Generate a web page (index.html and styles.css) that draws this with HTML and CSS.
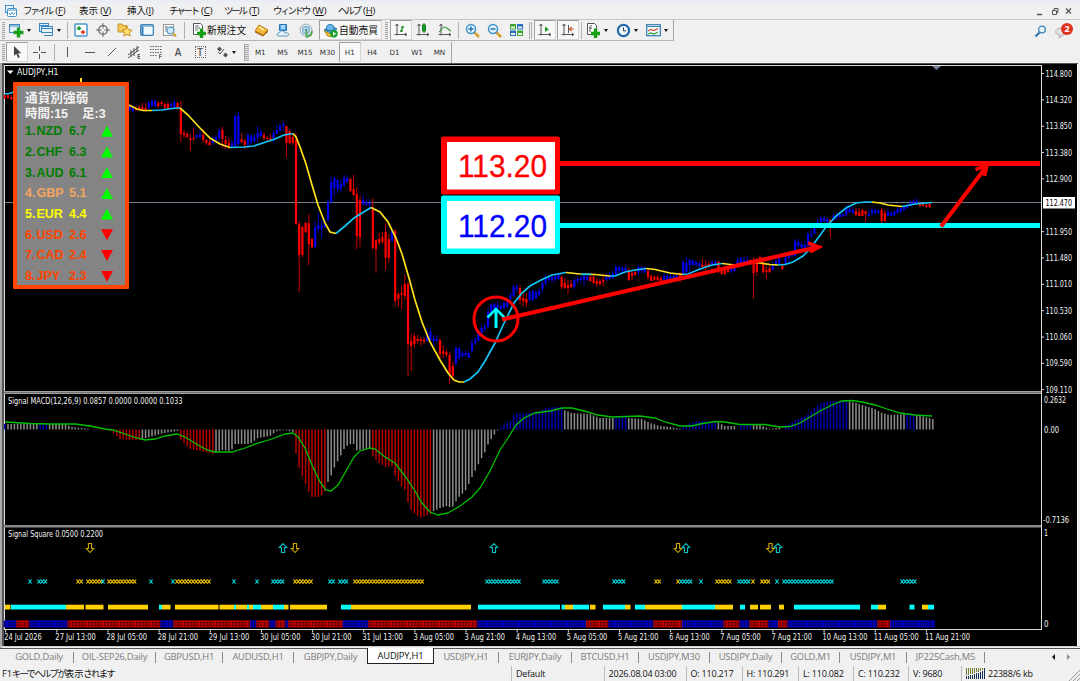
FILE: index.html
```html
<!DOCTYPE html>
<html lang="ja">

<head>
	<meta charset="UTF-8">
	<meta name="viewport" content="width=device-width, initial-scale=1.0">
	<title>AUDJPY,H1</title>
	<link rel="stylesheet" href="styles.css">
</head>

<body>
	<nav class="menubar">
		<svg class="app-icon" width="12" height="12" viewBox="0 0 12 12"><rect x=".5" y=".5" width="8" height="7" fill="#e8f4fd" stroke="#3f8fc8"/><rect x="2.5" y="3.5" width="9" height="8" rx="1" fill="#fff" stroke="#3f8fc8"/><path d="M3 5h8" stroke="#3f8fc8"/><path d="M4 8l1.5 2L7 7.500l1.500 2L10 7.500" fill="none" stroke="#3f8fc8"/></svg>
		<span class="menu m-file"><i>ファイル</i> (<u>F</u>)</span>
		<span class="menu m-view">表示 (<u>V</u>)</span>
		<span class="menu m-insert">挿入(<u>I</u>)</span>
		<span class="menu m-chart"><i>チャート</i> (<u>C</u>)</span>
		<span class="menu m-tool"><i>ツール</i> (<u>T</u>)</span>
		<span class="menu m-window"><i>ウィンドウ</i> (<u>W</u>)</span>
		<span class="menu m-help"><i>ヘルプ</i> (<u>H</u>)</span>
		<svg class="win-buttons" width="40" height="10" viewBox="0 0 40 10" fill="none" stroke="#555"><path d="M1 8.500h5" stroke-width="1.500"/><path d="M16.500 4.500h4v4h-4zM18 4V2.500h4v4h-1"/><path d="M30 2.500l5 5M35 2.500l-5 5" stroke-width="1.300"/></svg>
	</nav>

	<div class="toolbar main-tools">
		<div class="bar">
			<span class="grip"></span>
			<span class="tool drop"><svg width="16" height="16" viewBox="0 0 16 16"><rect x="1.500" y="2.500" width="10" height="8" fill="#e6f3fb" stroke="#3c8abf"/><path d="M2 4h9" stroke="#3c8abf"/><path d="M10.500 5.500v10M5.500 10.500h10" stroke="#18a018" stroke-width="3.400"/></svg></span>
			<span class="tool drop"><svg width="16" height="16" viewBox="0 0 16 16" fill="#dceffc" stroke="#3c86bd"><rect x="1.500" y="1.500" width="9" height="8"/><rect x="3.500" y="4.500" width="11" height="6"/><path d="M6 13.500h8.500v-3M2 3.500h8M4 6.500h10" fill="none"/></svg></span>
			<span class="sep"></span>
			<span class="tool"><svg width="14" height="14" viewBox="0 0 14 14"><rect x="1" y="1" width="12" height="12" rx="1" fill="#fff" stroke="#4a98cf" stroke-width="1.500"/><path d="M2.500 5.500l2.500-2.500 2.500 2.500L5 7.500z" fill="#1d9a2f"/><path d="M6.500 9l2.500-2 2.500 2L9 11.500z" fill="#e33d20"/></svg></span>
			<span class="tool"><svg width="14" height="14" viewBox="0 0 14 14" fill="none" stroke="#666"><circle cx="7" cy="7" r="4.300" stroke-width="1.300"/><path d="M7 0v5.500M7 8.500V14M0 7h5.500M8.500 7H14"/></svg></span>
			<span class="tool"><svg width="16" height="16" viewBox="0 0 16 16"><path d="M1 10V2h4l1 1.500h4V10z" fill="#f5c65b" stroke="#c99528"/><path d="M10 4.500l1.500 3.300 3.600.4-2.700 2.400.8 3.500-3.200-1.800L6.800 14l.8-3.400L5 8.200l3.500-.4z" fill="#ffe070" stroke="#c9901d"/></svg></span>
			<span class="tool"><svg width="14" height="14" viewBox="0 0 14 14"><rect x=".7" y="1.700" width="12.600" height="10.600" rx="1" fill="#f2f9fe" stroke="#3f84b8" stroke-width="1.300"/><path d="M1 3h12" stroke="#3f84b8"/><rect x="1.500" y="3.500" width="2" height="8.500" fill="#2f7fc0"/></svg></span>
			<span class="tool"><svg width="15" height="15" viewBox="0 0 15 15" fill="none"><rect x="1.500" y="1.500" width="10" height="11" fill="#fafafa" stroke="#999"/><path d="M3 4h3M4 3v6M9 3v3" stroke="#888"/><circle cx="8.500" cy="7.500" r="3.400" fill="#d3ebf9" stroke="#5aa3d2" stroke-width="1.300"/><path d="M11 10l3 3.500" stroke="#d7a23a" stroke-width="2"/></svg></span>
			<span class="sep sep-wide"></span>
			<span class="tool order"><svg width="16" height="16" viewBox="0 0 16 16"><path d="M2.500 1.500h7l2 2v9h-9z" fill="#fff" stroke="#555"/><path d="M4 4h4M4 6h5M4 8h3" stroke="#777"/><path d="M10.500 6.500v9.500M6 11.500h9" stroke="#17a017" stroke-width="3.400"/></svg><b>新規注文</b></span>
			<span class="tool"><svg width="15" height="14" viewBox="0 0 15 14"><path d="M5 2l9 5-5 5-8-4z" fill="#f4b93a" stroke="#b77e17"/><path d="M1 8l8 4 5-5v2l-5 4.500L1 9.500z" fill="#a86d12"/><path d="M5 4l5 3" stroke="#ffe9a0" stroke-width="1.500"/></svg></span>
			<span class="tool"><svg width="14" height="15" viewBox="0 0 14 15"><path d="M3.500 1.500h7v6h-7z" fill="#4ba7e4" stroke="#2475b5"/><path d="M5 3h4M5 5h4" stroke="#fff"/><path d="M3 13c-3 0-2-3 0-3 1-3 5-3 6 0 5-1 4 3 2 3z" fill="#e4f1fa" stroke="#5a93bb"/></svg></span>
			<span class="tool signal"><svg width="15" height="15" viewBox="0 0 15 15" fill="none"><circle cx="7" cy="7" r="5.800" stroke="#b0bec5" stroke-width="1.400"/><circle cx="7" cy="7" r="3.300" stroke="#6caecb" stroke-width="1.400"/><circle cx="7" cy="7" r="1.500" fill="#3a8cc0"/><path d="M7.500 7.500v6.500c4-.5 5.500-3 5.500-6" stroke="#45a84b" stroke-width="1.700"/></svg></span>
			<span class="tool auto pressed"><svg width="15" height="15" viewBox="0 0 15 15"><path d="M1 7l6.500-4L14 6l-6 4z" fill="#4aa0d8" stroke="#2a76a8"/><path d="M3.500 4.500c0-4 7.500-4 7.500 0v2c-2 1.500-5.500 1.500-7.500 0z" fill="#62b7e8" stroke="#2a76a8"/><path d="M1.500 8l6 3 4-2-2 5-5-1z" fill="#f3c53e" stroke="#b98c1b"/><circle cx="11" cy="10.800" r="3.700" fill="#15a32b"/><path d="M10 8.800l3 2-3 2z" fill="#fff"/></svg><b>自動売買</b></span>
			<span class="grip grip-gap"></span>
			<span class="tool pressed"><svg width="14" height="14" viewBox="0 0 14 14" fill="none" stroke="#555"><path d="M3 1.500v11M.5 11.500h12M1.500 3L3 1l1.500 2M11 10l2 1.500-2 1.500"/><path d="M8 3v6M8 4h2M6 8h2" stroke="#18871f" stroke-width="1.300"/></svg></span>
			<span class="tool"><svg width="14" height="14" viewBox="0 0 14 14" fill="none" stroke="#555"><path d="M3 1.500v11M.5 11.500h12M1.500 3L3 1l1.500 2M11 10l2 1.500-2 1.500"/><path d="M8 0v10" stroke="#18871f"/><rect x="6.500" y="2" width="3" height="6" fill="#16a32a" stroke="#117a1c"/></svg></span>
			<span class="tool"><svg width="14" height="14" viewBox="0 0 14 14" fill="none" stroke="#555"><path d="M3 1.500v11M.5 11.500h12M1.500 3L3 1l1.500 2M11 10l2 1.500-2 1.500"/><path d="M1 9c2-1 3-5 5.500-5S10 7 13 8" stroke="#3b9c43" stroke-width="1.200"/></svg></span>
			<span class="sep"></span>
			<span class="tool"><svg width="15" height="15" viewBox="0 0 15 15" fill="none"><path d="M9 9l5 5" stroke="#d5a12e" stroke-width="2.600"/><circle cx="6" cy="6" r="4.500" fill="#e3f3fc" stroke="#3e93cb" stroke-width="1.500"/><path d="M3.500 6h5M6 3.500v5" stroke="#2578b4" stroke-width="1.500"/></svg></span>
			<span class="tool"><svg width="15" height="15" viewBox="0 0 15 15" fill="none"><path d="M9 9l5 5" stroke="#d5a12e" stroke-width="2.600"/><circle cx="6" cy="6" r="4.500" fill="#e3f3fc" stroke="#3e93cb" stroke-width="1.500"/><path d="M3.500 6h5" stroke="#2578b4" stroke-width="1.500"/></svg></span>
			<span class="tool"><svg width="15" height="14" viewBox="0 0 15 14"><path d="M1 1h6v5.500H1zM8 7.500h6V13H8z" fill="#3fa337"/><path d="M8 1h6v5.500H8zM1 7.500h6V13H1z" fill="#2f6fc0"/><path d="M2 3.500h4v2H2zM9 3.500h4v2H9zM2 10h4v2H2zM9 10h4v2H9z" fill="#e9f5e6"/></svg></span>
			<span class="sep sep-double"></span>
			<span class="tool pressed"><svg width="14" height="14" viewBox="0 0 14 14" fill="none" stroke="#555"><path d="M3 1.500v11M.5 11.500h12M1.500 3L3 1l1.500 2M11 10l2 1.500-2 1.500"/><path d="M7 3.500l4 2.800L7 9z" fill="#1fa12c" stroke="none"/></svg></span>
			<span class="tool pressed"><svg width="14" height="14" viewBox="0 0 14 14" fill="none" stroke="#555"><path d="M3 1.500v11M.5 11.500h12M1.500 3L3 1l1.500 2M11 10l2 1.500-2 1.500M7.500 2v8"/><path d="M8 6h5M10.500 4L8.500 6l2 2" stroke="#c4552a" stroke-width="1.200"/></svg></span>
			<span class="sep sep-tight"></span>
			<span class="tool drop"><svg width="15" height="16" viewBox="0 0 15 16"><path d="M1.500 1.500h7l2 2v9h-9z" fill="#fff" stroke="#555"/><path d="M6 3.500c-1.500-.5-2 1-2 3.500v3M3 6h3" fill="none" stroke="#555"/><path d="M9.500 6.500v9.500M5 11.500h9" stroke="#17a017" stroke-width="3.400"/></svg></span>
			<span class="tool drop"><svg width="15" height="15" viewBox="0 0 15 15" fill="none"><circle cx="7.500" cy="7.500" r="5.600" fill="#eef7fd" stroke="#2368a8" stroke-width="2.200"/><path d="M7.500 4.500v3.300H10" stroke="#333"/></svg></span>
			<span class="tool drop"><svg width="15" height="14" viewBox="0 0 15 14" fill="none"><rect x=".7" y="1.700" width="13.600" height="11" fill="#f4fafe" stroke="#3c83b5" stroke-width="1.300"/><path d="M1 3.500h13" stroke="#3c83b5"/><path d="M2 8l3-1.500 3 1 4-2" stroke="#d0532c" stroke-width="1.200"/><path d="M2 11l3-1 3 1 4-2" stroke="#329c3b" stroke-width="1.200"/></svg></span>
		</div>
		<svg class="find" width="14" height="14" viewBox="0 0 14 14" fill="none"><path d="M5.500 8.500l-4 4" stroke="#2f6da5" stroke-width="2"/><circle cx="8" cy="5.500" r="3.300" fill="#eaf4fb" stroke="#3a82bd" stroke-width="1.300"/></svg>
		<span class="chat"><svg width="14" height="14" viewBox="0 0 14 14"><path d="M7 3c-8 0-8 7-2 7l-1 3 4-3c7-1 6-7-1-7z" fill="#e4e4e4" stroke="#aaa"/></svg><em>2</em></span>
	</div>

	<div class="toolbar line-tools">
		<div class="bar">
			<span class="grip"></span>
			<span class="tool pressed"><svg width="12" height="14" viewBox="0 0 12 14"><path d="M3 1v10l2.300-2.200L7 13l1.800-.8L7 8.200h3.300z" fill="#444"/></svg></span>
			<span class="tool"><svg width="14" height="14" viewBox="0 0 14 14" stroke="#555"><path d="M7.500 1v5M7.500 9v5M1 7.500h5M9 7.500h5"/></svg></span>
			<span class="sep sep-gap"></span>
			<span class="tool"><svg width="14" height="14" viewBox="0 0 14 14" stroke="#555"><path d="M6.500 2v10"/></svg></span>
			<span class="tool"><svg width="14" height="14" viewBox="0 0 14 14" stroke="#555"><path d="M2 7.500h10"/></svg></span>
			<span class="tool"><svg width="14" height="14" viewBox="0 0 14 14" stroke="#555"><path d="M3 11l8-8"/></svg></span>
			<span class="tool"><svg width="14" height="14" viewBox="0 0 14 14" stroke="#555" fill="none"><path d="M1 10l11-8M1 13l11-8M4 5v7M7 3v8M10 1v6M13 9.500h-2v4h2M11 11.500h2"/></svg></span>
			<span class="tool"><svg width="14" height="14" viewBox="0 0 14 14" stroke="#666" fill="none"><path d="M1 1.500h12M1 4.500h12M1 7.500h12M1 10.500h7" stroke-dasharray="1.500 1"/><path d="M12.500 9.500h-2v4M10.500 11.500h2"/></svg></span>
			<span class="tool letter">A</span>
			<span class="tool letter boxed"><span>T</span></span>
			<span class="tool drop shapes"><svg width="14" height="14" viewBox="0 0 14 14" fill="#555"><path d="M2 4l2.500-2.500L7 4 4.500 6.500zM8 10l2.500-2.500L13 10l-2.500 2.500z"/><path d="M3 7l2 2 4-5" fill="none" stroke="#555"/></svg></span>
			<span class="grip grip-mid"></span>
			<span class="frame">M1</span>
			<span class="frame">M5</span>
			<span class="frame">M15</span>
			<span class="frame">M30</span>
			<span class="frame pressed">H1</span>
			<span class="frame">H4</span>
			<span class="frame">D1</span>
			<span class="frame">W1</span>
			<span class="frame">MN</span>
		</div>
	</div>

	<main class="chart-window">
		<svg class="chart" id="chart" width="1080" height="585" viewBox="0 63 1080 585"></svg>
		<section class="strength">
			<h2>通貨別強弱</h2>
			<h3><span>時間:15</span><span>足:3</span></h3>
			<ol>
				<li class="strong"><span>1.</span><span>NZD</span><span>6.7</span><i class="up"></i></li>
				<li class="strong"><span>2.</span><span>CHF</span><span>6.3</span><i class="up"></i></li>
				<li class="strong"><span>3.</span><span>AUD</span><span>6.1</span><i class="up"></i></li>
				<li class="mid"><span>4.</span><span>GBP</span><span>5.1</span><i class="up"></i></li>
				<li class="even"><span>5.</span><span>EUR</span><span>4.4</span><i class="up"></i></li>
				<li class="weak"><span>6.</span><span>USD</span><span>2.6</span><i class="down"></i></li>
				<li class="weak"><span>7.</span><span>CAD</span><span>2.4</span><i class="down"></i></li>
				<li class="weak"><span>8.</span><span>JPY</span><span>2.3</span><i class="down"></i></li>
			</ol>
		</section>
	</main>

	<div class="tabs">
		<span>GOLD,Daily</span>
		<span>OIL-SEP26,Daily</span>
		<span>GBPUSD,H1</span>
		<span>AUDUSD,H1</span>
		<span>GBPJPY,Daily</span>
		<span class="active">AUDJPY,H1</span>
		<span>USDJPY,H1</span>
		<span>EURJPY,Daily</span>
		<span>BTCUSD,H1</span>
		<span>USDJPY,M30</span>
		<span>USDJPY,Daily</span>
		<span>GOLD,M1</span>
		<span>USDJPY,M1</span>
		<span>JP225Cash,M5</span>
		<svg class="tab-scroll" width="24" height="8" viewBox="0 0 24 8"><path d="M5 1v6L2 4z" fill="#111"/><path d="M17 1v6l3-3z" fill="#888"/></svg>
	</div>

	<footer class="status">
		<span class="help">F1<i>キーでヘルプが</i>表示<i>されます</i></span>
		<span>Default</span>
		<span>2026.08.04 03:00</span>
		<span>O: 110.217</span>
		<span>H: 110.291</span>
		<span>L: 110.082</span>
		<span>C: 110.232</span>
		<span>V: 9680</span>
		<span class="net"><svg width="19" height="11" viewBox="0 0 19 11" shape-rendering="crispEdges"><path d="M.5 0v7M2.500 0v7M4.500 0v6M6.500 0v6M8.500 0v5M10.500 0v4M12.500 0v4M14.500 0v3M16.500 0v2" stroke="#6f7d2c"/><path d="M.5 8v3M2.500 8v3M4.500 7v4M6.500 7v4M8.500 6v5M10.500 5v6M12.500 5v6M14.500 4v7M16.500 3v8M18.500 0v11" stroke="#143052"/></svg>22388/6 kb</span>
		<svg class="resize" width="12" height="12" viewBox="0 0 12 12" stroke="#999"><path d="M1 12L12 1M5 12l7-7M9 12l3-3"/></svg>
	</footer>

	<script src="chart.js"></script>
</body>

</html>
```
FILE: styles.css
```css
		* {
			box-sizing: border-box;
		}

		body {
			margin: 0;
			width: 1080px;
			height: 681px;
			overflow: hidden;
			display: flex;
			flex-direction: column;
			background: #f0f0f0;
			font-family: 'Open Sans', 'Noto Sans CJK JP', sans-serif;
			font-size: 9px;
			color: #111;
		}

		i, em, b {
			font-style: normal;
			font-weight: normal;
		}

		/* menu */
		.menubar {
			height: 19px;
			padding: 3px 4px 0 5px;
			display: flex;
			align-items: center;
			background: linear-gradient(#e9eef6 0 2px, #f0f0f0 3px);
			line-height: 16px;
			font-size: 9.5px;
			white-space: nowrap;
		}

		.app-icon {
			margin-right: 6px;
		}

		.menu {
			letter-spacing: -.1px;
		}

		.menu i {
			letter-spacing: -2.3px;
			margin-right: 1px;
		}

		.m-file { width: 56px; }
		.m-view { width: 48px; }
		.m-insert { width: 42px; }
		.m-chart { width: 55px; }
		.m-tool { width: 49px; }
		.m-window { width: 65px; }
		.m-help { width: 50px; }

		.win-buttons {
			margin-left: auto;
		}

		/* toolbars */
		.toolbar {
			display: flex;
			align-items: center;
			background: #f0f0f0;
		}

		.main-tools {
			height: 22px;
			border-top: 1px solid #c6c6c6;
		}

		.line-tools {
			height: 22px;
		}

		.bar {
			height: 21px;
			display: flex;
			align-items: center;
			border-right: 1px solid #a5a5a5;
			border-bottom: 1px solid #b4b4b4;
		}

		.line-tools .bar {
			border-bottom: none;
			padding-left: 2px;
		}

		.grip {
			width: 3px;
			height: 17px;
			margin: 0 0 0 2px;
			background: repeating-linear-gradient(#a8a8a8 0 1px, #e6e6e6 1px 2px);
		}

		.line-tools .grip {
			margin: 0 1px 0 0;
		}

		.grip-gap {
			margin: 0 2px 0 3px;
		}

		.line-tools .grip-mid {
			margin: 0;
			margin-left: 4px;
			border-left: 1px solid #a5a5a5;
			width: 5px;
		}

		.tool {
			width: 22px;
			height: 20px;
			display: flex;
			align-items: center;
			justify-content: center;
		}

		.tool.drop {
			width: 30px;
			justify-content: flex-start;
			padding-left: 3px;
		}

		.tool.drop::after {
			content: '';
			margin-left: 3px;
			border: 2.5px solid transparent;
			border-top: 3px solid #111;
			border-bottom: 0;
		}

		.tool.shapes {
			width: 29px;
		}

		.tool.shapes svg {
			margin-left: 1px;
		}

		.tool b {
			font-family: 'Noto Sans CJK JP', sans-serif;
			font-size: 9.8px;
			white-space: nowrap;
		}

		.tool.order {
			width: 62px;
			justify-content: flex-start;
			padding-left: 3px;
		}

		.tool.signal {
			width: 25px;
		}

		.tool.auto {
			width: 63px;
			gap: 1px;
		}

		.pressed {
			background: #f8f8f8;
			border: 1px solid #d5d5d5;
			border-top-color: #a0a0a0;
			border-left-color: #a0a0a0;
		}

		.main-tools .pressed + .pressed {
			margin-left: 1px;
		}

		.sep {
			width: 1px;
			height: 17px;
			margin: 0 2px;
			background: #b0b0b0;
		}

		.sep-wide {
			margin: 0 3px 0 4px;
		}

		.sep-tight {
			margin: 0 1px 0 2px;
		}

		.sep-double {
			width: 3px;
			background: none;
			border: 1px solid #b0b0b0;
			border-width: 0 1px;
		}

		.sep-gap {
			margin: 0 2px 0 4px;
		}

		.letter {
			font-size: 10px;
			font-weight: 600;
			color: #555;
		}

		.boxed span {
			border: 1px dotted #666;
			width: 11px;
			line-height: 10px;
			text-align: center;
		}

		.frame {
			width: 22.400px;
			height: 20px;
			display: flex;
			align-items: center;
			justify-content: center;
			font-family: 'DejaVu Sans', sans-serif;
			font-size: 7.2px;
			letter-spacing: -.1px;
			color: #333;
		}

		.find {
			margin-left: auto;
		}

		.chat {
			position: relative;
			width: 14px;
			height: 14px;
			margin: 3px 11px 0 7px;
		}

		.chat em {
			position: absolute;
			left: 6px;
			top: -2px;
			width: 12px;
			height: 12px;
			border-radius: 6px;
			background: #e0301e;
			color: #fff;
			font-weight: 700;
			line-height: 12px;
			text-align: center;
		}

		/* chart */
		.chart-window {
			position: relative;
			height: 585px;
		}

		.chart {
			display: block;
		}

		.chart text {
			font-family: 'DejaVu Sans Condensed', 'DejaVu Sans', sans-serif;
			font-size: 8px;
			fill: #f2f2f2;
		}

		.chart .tag {
			font-family: 'Liberation Sans', sans-serif;
			font-size: 31px;
		}

		.chart .tag-red {
			fill: #f00;
			stroke: #f00;
			stroke-width: .3;
		}

		.chart .tag-blue {
			fill: #00f;
			stroke: #00f;
			stroke-width: .3;
		}

		.chart .now {
			fill: #000;
		}

		.strength {
			position: absolute;
			left: 13px;
			top: 19px;
			width: 116px;
			height: 207px;
			padding: 4px 8px;
			border: 4px solid #ff4500;
			border-radius: 1px;
			background: #848484;
			font-family: 'Liberation Sans', 'Noto Sans CJK JP', sans-serif;
		}

		.strength h2,
		.strength h3 {
			margin: 0;
			font-size: 12.700px;
			line-height: 16px;
			font-weight: 700;
			color: #f2f2f2;
			white-space: nowrap;
		}

		.strength h3 {
			display: flex;
			gap: 14px;
			font-size: 12.500px;
		}

		.strength ol {
			margin: -1px 0 0;
			padding: 0;
			list-style: none;
		}

		.strength li {
			display: grid;
			grid-template-columns: 11.500px 32.500px 32px 12px;
			align-items: center;
			height: 20.700px;
			font-size: 12.500px;
			font-weight: 700;
		}

		.strong { color: #007d00; }
		.mid { color: #f4a460; }
		.even { color: #ff0; }
		.weak { color: #ff4500; }

		.up,
		.down {
			width: 12px;
			height: 11px;
			background: #0f0;
			clip-path: polygon(50% 0, 100% 100%, 0 100%);
		}

		.down {
			background: #f00;
			clip-path: polygon(0 0, 100% 0, 50% 100%);
		}

		/* chart tabs */
		.tabs {
			height: 17px;
			padding-left: 5px;
			display: grid;
			grid-template-columns: 69px 82px 67px 71px 73px 67px 65px 73px 67px 71px 72px 58px 67px 78px 1fr;
			align-items: center;
			border-top: 1px solid #555;
			background: #f0f0f0;
			font-size: 9.400px;
			letter-spacing: -.2px;
			color: #7c7c7c;
		}

		.tabs span {
			height: 11px;
			line-height: 10px;
			text-align: center;
			border-right: 1px solid #8c8c8c;
			white-space: nowrap;
		}

		.tabs .active {
			align-self: start;
			height: 16px;
			line-height: 15px;
			margin-top: -1px;
			background: #fff;
			border: 1px solid #222;
			border-top: none;
			color: #111;
		}

		.tabs span:nth-child(5) {
			border-right: none;
		}

		.tab-scroll {
			justify-self: end;
			margin-right: 6px;
		}

		/* status line */
		.status {
			position: relative;
			height: 16px;
			padding-left: 2px;
			display: grid;
			grid-template-columns: 509px 92.500px 82px 56px 56.500px 55px 55px 53px 1fr;
			align-items: center;
			letter-spacing: -.2px;
			background: #f0f0f0;
		}

		.status span {
			height: 15px;
			padding-left: 4px;
			line-height: 15px;
			border-left: 1px solid #bbb;
			white-space: nowrap;
		}

		.status .help {
			border: none;
			padding: 0;
			font-size: 9.4px;
		}

		.help i {
			letter-spacing: -1.700px;
		}

		.status .net {
			display: flex;
			align-items: center;
			gap: 3px;
		}

		.resize {
			position: absolute;
			right: 0;
			bottom: 0;
		}
```
FILE: chart.js
```js
const chart = document.getElementById('chart');
const STEP = 3.2;
const barX = i => 4.8 + i * STEP;

function add(name, attrs, text) {
	const node = document.createElementNS('http://www.w3.org/2000/svg', name);
	for (const key in attrs) node.setAttribute(key, attrs[key]);
	if (text) node.textContent = text;
	chart.appendChild(node);
	return node;
}

function rect(x, y, width, height, fill) {
	return add('rect', { x, y, width, height, fill });
}

function line(points, stroke, width) {
	return add('polyline', { points, stroke, 'stroke-width': width, fill: 'none' });
}

function label(x, y, text, width, cls) {
	return add('text', { x, y, textLength: width, lengthAdjust: 'spacingAndGlyphs', class: cls || '' }, text);
}

// window frame
rect(0, 63, 1080, 585, '#f0f0f0');
rect(0, 63, 2, 585, '#a9a9a9');
rect(2, 63, 1076, 583, '#555');
rect(4, 64, 1073, 582, '#000');
rect(1077, 64, 1, 583, '#fff');
rect(0, 646, 1080, 1, '#ccc');
rect(4, 65, 1037, 1, '#ddd');
rect(4, 65, 1, 565, '#ddd');

// current price level
rect(5, 202, 1036, 1, '#708090');

// candles: colour, high, body top, body bottom, low
const candles = {
	0: 'r 94 96 98 99|r 94 95 98 99|r 95 97 99 100',
	39: `b 104 106 110 111|b 106 108 111 112|r 106 108 110 111|r 105 107 110 110|r 103 107 110 111|r 103 108 110 112
|b 101 103 108 109|b 99 101 106 107|b 100 101 106 107|r 101 103 106 108|r 101 102 104 106|r 103 104 108 110|r 102 104 109 109
|b 102 104 106 108|b 99 102 108 108|r 102 103 109 110|r 101 108 134 142|r 130 133 135 138|r 132 134 137 138|r 134 138 140 151
|r 128 138 139 141|b 134 135 137 139|b 130 135 137 139|r 129 135 140 143|r 139 140 143 145|r 139 142 145 146|b 136 139 143 145
|b 135 137 141 142|b 128 131 138 140|r 127 130 139 148|r 136 140 144 149|r 138 143 146 149|b 140 143 146 148|b 114 116 146 147
|b 112 116 144 145|r 133 139 142 143|r 139 141 145 149|b 133 135 145 146|b 134 136 142 144|b 134 137 141 143|b 126 133 138 142
|b 129 132 136 137|r 132 135 138 140|r 136 138 139 141|r 134 138 140 142|b 130 133 138 142|b 125 130 134 134|b 123 126 131 131
|b 121 124 126 131|r 126 126 143 157|r 130 131 143 144|r 135 137 143 145|r 133 140 224 225|r 221 224 255 292|r 226 227 255 257
|r 222 223 232 233|r 214 223 244 265|r 238 239 247 248|b 221 227 247 248|b 213 225 229 233|b 220 226 229 238|b 218 221 227 228
|b 199 202 220 222|b 177 182 202 204|b 177 178 188 196|b 179 180 189 193|b 180 184 189 192|b 175 178 186 186|b 175 178 182 183
|r 178 179 191 192|r 175 189 195 196|r 187 194 236 249|r 196 200 237 247|b 195 200 204 206|b 199 202 205 206|b 199 203 205 210
|r 198 207 248 250|r 239 240 249 273|r 233 239 243 245|r 232 237 242 244|r 223 232 258 270|r 234 239 258 263|b 229 231 241 242
|r 229 231 301 305|r 292 294 299 307|r 286 293 295 309|r 274 284 296 300|r 282 284 344 376|r 334 341 346 371|r 333 336 344 348
|r 335 339 341 344|r 337 339 341 346|r 337 340 342 344|b 328 333 341 342|b 328 332 340 341|b 335 338 341 349|b 335 339 341 342
|r 339 340 354 358|r 345 351 354 358|r 350 352 355 357|r 352 355 374 384|r 362 366 376 380|b 346 348 364 365|b 347 348 358 360
|b 351 353 356 358|b 350 353 355 357|b 351 353 358 358|b 339 343 351 352|b 337 340 343 345|b 331 333 341 341|b 324 328 333 334
|b 323 327 329 332|b 308 312 327 327|b 303 305 313 315|b 302 304 309 311|b 302 305 308 310|b 303 306 309 310|b 301 303 308 310
|b 300 302 307 308|b 292 295 299 300|b 284 287 296 297|b 284 287 289 292|r 285 288 300 304|r 291 298 301 306|r 293 299 303 307
|b 290 292 300 302|b 289 291 300 301|b 290 292 298 299|b 288 291 295 296|b 281 283 289 292|b 274 277 284 285|b 275 278 280 282
|b 276 277 280 283|b 274 276 279 282|b 273 275 279 280|r 276 277 287 289|r 278 283 288 289|r 280 285 288 294|r 280 284 287 288
|b 278 280 287 289|b 277 279 281 284|b 276 278 280 283|b 274 276 280 286|b 274 277 280 281|r 273 277 281 282|r 275 277 283 284
|r 278 281 284 287|r 279 281 284 286|r 276 280 282 286|b 273 276 280 281|b 272 275 279 280|b 271 273 278 279|b 265 267 275 276
|b 265 267 271 273|b 266 268 271 274|b 265 268 271 272|r 268 270 280 281|r 270 273 276 280|r 269 272 275 275|b 265 267 272 276
|b 266 267 271 273|b 266 268 272 274|r 269 271 277 280|r 274 276 281 281|r 275 277 280 281|r 275 277 280 281|r 276 278 281 281
|b 273 276 280 281|b 273 276 280 280|b 274 276 279 280|b 274 276 280 280|b 274 276 279 280|r 272 275 279 282|b 260 262 274 275
|b 257 263 272 274|b 259 260 265 272|b 260 260 265 266|b 261 262 265 266|b 262 263 266 268|r 259 265 267 267|r 260 265 268 271
|r 262 264 266 268|b 260 262 265 266|b 260 262 265 266|r 261 262 271 274|r 267 270 274 275|r 269 270 274 275|r 267 270 272 273
|b 266 268 271 273|b 263 267 271 272|b 258 260 264 267|b 257 258 263 264|b 257 260 262 263|b 256 260 262 263|r 259 260 262 265
|r 257 262 273 299|r 258 262 272 276|r 255 257 262 265|r 257 262 272 274|r 266 270 272 279|r 265 268 272 273|b 262 265 270 270
|b 259 261 265 266|b 256 258 264 264|r 263 266 269 270|b 255 257 264 265|b 253 255 258 264|b 252 254 256 258|b 239 241 256 257
|b 239 242 246 247|b 242 244 248 249|b 241 245 250 251|b 232 234 246 247|b 229 234 236 238|b 224 227 234 234|b 219 222 227 228
|b 216 218 222 223|b 216 218 221 222|b 218 219 222 223|r 219 220 222 237|b 213 216 220 221|b 212 215 218 219|b 213 214 217 218
|b 213 214 216 217|b 205 208 215 216|b 207 209 212 213|b 207 210 213 214|r 208 211 215 216|r 208 212 216 216|r 209 210 216 216
|r 211 211 214 221|b 210 214 216 217|b 207 210 213 216|b 208 210 213 215|b 209 211 213 214|r 208 210 221 223|r 210 213 221 222
|b 209 212 216 217|b 211 213 216 216|b 210 212 215 216|b 207 209 213 214|b 206 208 212 213|b 206 207 210 211|b 204 206 208 209
|b 200 203 206 207|b 199 201 204 205|b 198 201 203 204|r 202 203 206 207|r 203 204 206 206|r 203 205 207 208|r 202 204 207 208`
};

for (const start in candles) {
	candles[start].split('|').forEach((row, n) => {
		const [kind, high, top, bottom, low] = row.trim().split(' ');
		const x = barX(+start + n);
		rect(x - .5, high, 1, low - high, kind === 'r' ? '#c80000' : '#0000c0');
		rect(x - 1.1, top, 2.2, bottom - top, kind === 'r' ? '#f00' : '#00e');
	});
}

// moving average, coloured by slope
const RISE = '#14c4f4';
const FALL = '#ffe21a';
const MA = 1.7;
line('5,94 9,93.5 14,92', RISE, MA);
line('81,78 81,83', FALL, 2);
line('129,105 137,109 143,110.5 152,110.5', FALL, MA);
line('152,110.5 162,110 172,108.5 180,108', RISE, MA);
line('180,108 188,115 200,128 210,138 220,144 230,147.5', FALL, MA);
line('230,147.5 244,147 254,146 266,142 275,139 284,135 293,133.5', RISE, MA);
line('293,133.5 296,137 300,147 306,164 312,185 318,205 325,223 330,232 336,233.5', FALL, MA);
line('336,233.5 345,226 354,218 362,213 371,207.5', RISE, MA);
line('371,207.5 380,212 388,222 396,238 402,254 409,278 415,300 422,322 430,342 440,360 448,373 454,380 459,382 464,382', FALL, MA);
line('464,382 470,379 478,372 485,361 495,343 505,321 514,303 522,293 530,286 541,280 552,275 566,272.5', RISE, MA);
line('566,272.5 580,274 595,274.5 610,276', FALL, MA);
line('581,274.3 591,274.3', RISE, MA);
line('610,276 615,276 625,272 635,270 646,268.5', RISE, MA);
line('646,268.5 655,269.500 670,273 683,274.5', FALL, MA);
line('683,274.5 688,274 700,269 712,265 722,263.5', RISE, MA);
line('722,263.5 735,265 750,262 760,263 770,264.5 778,265', FALL, MA);
line('778,265 785,264.5 793,262 803,256 810,249 818,238 826,227 836,216 846,208 856,203 865,202 872,202', RISE, MA);
line('872,202 880,203 888,205 902,206.5', FALL, MA);
line('902,206.5 915,204 932,202.5', RISE, MA);

// price levels and tags
line('560,163.5 1040,163.5', '#f00', 5);
line('560,225.5 1040,225.5', '#0ff', 5);
add('rect', { x: 441, y: 136.5, width: 119, height: 58, rx: 2, fill: '#f00' });
rect(447, 142, 108, 47.5, '#fff');
add('rect', { x: 441, y: 195.5, width: 119, height: 58.5, rx: 2, fill: '#0ff' });
rect(447, 201, 108, 47.5, '#fff');
label(458, 177, '113.20', 89, 'tag tag-red');
label(458, 237, '112.20', 89, 'tag tag-blue');

// entry point and forecast arrows
line('496,328 496,309', '#0ff', 3);
line('487.5,317.5 496,309 504.5,317.5', '#0ff', 2.6);
add('circle', { cx: 496, cy: 319, r: 22, fill: 'none', stroke: '#f00', 'stroke-width': 3 });
line('502,319.5 818,247', '#f00', 4);
line('808,243 819,247 810,252', '#f00', 3.6);
line('941,226.5 986,167', '#f00', 4);
line('975.5,169.5 987,165.5 984.5,176', '#f00', 3.6);
add('path', { d: 'M932 66h9l-4.500 4z', fill: '#708090' });

// MACD histogram: colour, then x,y tips along the run
const histogram = [
	['b', '4,424 7,424'], ['g', '8,424 38,424'], ['b', '39,424 48,424'],
	['g', '48.500,424 65,424 72,427 90,429'], ['r', '93,430 110,430 113,433 120,439 130,440 141,440'],
	['g', '142,439 150,437 160,434 170,432 178,431'], ['r', '179,438 185,444 190,449 200,451 213,454'],
	['g', '215,453 222,450 231,451 235,444 250,444 258,438 270,436 277,431 285,430 294,432'],
	['r', '295,449 299,467 303,478 308,490 311,497 318,497 322,495 326,490'],
	['g', '327,484 331,476 335,466 341,455 345,447 350,444 354,444 357,451 360,450 371,448'],
	['r', '371.500,455 378,462 385,467 392,466 395,476 402,487 405,490 408,502 411,510 415,514 420,518 431,514'],
	['g', '432,512 440,508 447,506 452,508 458,498 466,490 472,477 480,461 485,452 489,442 494,435 498,430'],
	['b', '500,428 505,424 511,420 515,413 530,413 540,411 545,408 555,407 563,407'],
	['g', '564,410 572,413 590,414 600,418 614,418'], ['b', '615,416 627,416'],
	['g', '628,418 642,419 650,423 660,426 670,427 681,429'], ['b', '682,427 690,423 697,421 716,422'],
	['g', '717,422 725,426 737,426'], ['b', '738,425 752,424'], ['g', '753,425 760,425 770,429 782,427'],
	['b', '783,426 790,424 795,420 805,416 812,410 820,403 830,401 847,401'],
	['g', '848,401 856,403 865,406 875,409 882,413 890,415 905,414'], ['b', '906,414 915,415'],
	['g', '916,415 925,417 933,419']
];
const histColors = { r: '#b80000', g: '#8c8c8c', b: '#0000b4' };
const ZERO = 429.5;

histogram.forEach(([kind, tips]) => {
	const pts = tips.split(' ').map(p => p.split(',').map(Number));
	for (let i = 0; i < 291; i++) {
		const x = barX(i);
		for (let k = 1; k < pts.length; k++) {
			const [x1, y1] = pts[k - 1];
			const [x2, y2] = pts[k];
			if (x < x1 || x >= x2) continue;
			const y = y1 + (y2 - y1) * (x - x1) / (x2 - x1);
			rect(x - .75, Math.min(y, ZERO), 1.5, Math.max(.7, Math.abs(y - ZERO)), histColors[kind]);
		}
	}
});
line('5,422 30,423.5 50,424 75,424 90,426 105,429 113,430 125,434 137,438 145,440 155,439 165,436 177,434 185,437 198,445 207,450 215,452 232,452 245,448 258,443 272,439 285,434 293,433 298,437 305,448 312,465 320,482 326,490 331,491 338,485 346,471 354,457 360,451 370,448 375,449 385,457 395,463 405,476 415,491 422,503 430,512 438,515 448,513 460,506 472,497 480,488 490,471 500,450 508,438 516,425 524,418 535,413 550,411 562,408 572,408 584,411 598,415 612,417 640,416 655,418 665,422 680,426 692,426 700,424 715,421.5 725,422 740,424.5 765,424.5 780,427 790,426.5 800,423 810,417 820,411 832,405 842,401 852,400.5 862,402 875,405 887,409 900,413 915,415 932,416', '#00c000', 1.3);

// signal arrows
const GOLD = '#ffd000';
[[90, 0], [283, 1], [295, 0], [494, 1], [678, 0], [686, 1], [770.5, 0], [778, 1]].forEach(([x, up]) => {
	add('path', {
		d: 'M0 -4.500L3.700 -.5H1.600V4.500H-1.600V-.5H-3.700Z',
		transform: `translate(${x} 548) rotate(${up ? 0 : 180})`,
		fill: 'none', stroke: up ? '#00c4cc' : '#cfa400', 'stroke-width': 1.1
	});
});

// small crosses: colour, from, to
const crosses = 'c 30 30|c 39 46|y 78 82|y 88 101|c 103 106|y 109 136|c 151 151|c 173 173|y 177 209|c 234 234|c 257 257|c 273 283|y 295 312|c 330 334|c 340 347|y 355 424|c 487 520|c 544 558|c 614 625|y 656 660|y 678 678|c 681 692|c 701 701|y 717 731|c 739 750|y 753 753|y 762 769|c 777 777|c 784 833|c 902 916';
crosses.split('|').forEach(run => {
	const [kind, from, to] = run.split(' ');
	for (let x = +from; x <= +to; x += STEP) {
		add('path', { d: `M${x - 1.6} 579.500l3.200 4m0-4l-3.200 4`, stroke: kind === 'c' ? '#00e8f0' : GOLD, 'stroke-width': 1.1 });
	}
});

// trend blocks
const blocks = 'y 5 10.5|c 11 66|y 66 84|y 85.5 103.5|y 108 148|c 159 162|y 162 170.5|y 175 218.5|y 219.5 234|c 234 236|y 236 247|c 247 249|y 249 253|c 253 261|y 261 273|c 273 284|y 284 288.5|y 290 327|c 341 351|y 351 471|c 478 560|c 561.5 565|y 565 573|c 573 589|y 590 595.5|c 603 625|y 625 630.5|c 635 645|y 645 682|c 682 715|y 715 733|c 740 745|y 750 758|y 760 771|y 779 784|c 794 860|c 871 878|y 878 886|c 909.5 914.5|y 922 928|c 928 934';
blocks.split('|').forEach(run => {
	const [kind, from, to] = run.split(' ');
	rect(+from, 604.7, to - from, 4.8, kind === 'c' ? '#0ff' : GOLD);
});

// bottom squares
const redRuns = [[17, 29], [68, 160], [173, 249], [256, 268], [276, 284], [288, 341], [369, 478], [586, 607], [653, 683], [723, 738], [748, 767], [777, 786], [876, 891]];
for (let i = 0; i < 291; i++) {
	const x = barX(i);
	const red = redRuns.some(([a, b]) => x >= a && x <= b);
	rect(x - 1.2, 620.5, 3.4, 6.8, red ? '#c80000' : '#0000cc');
	rect(x - .2, 622, 1.4, 1.5, red ? '#200000' : '#000020');
	rect(x - .2, 624.5, 1.4, 1.5, red ? '#200000' : '#000020');
}

// panel borders and axes
rect(4, 391, 1037, 3, '#a0a0a0');
rect(4, 392, 1037, 1, '#707070');
rect(4, 525, 1037, 2.5, '#888');
rect(4, 629, 1037, 1, '#ddd');
rect(1041, 65, 1, 565, '#ddd');

const prices = ['114.800', '114.320', '113.850', '113.380', '112.900', '', '111.950', '111.480', '111.010', '110.530', '110.060', '109.590', '109.110'];
prices.forEach((price, n) => {
	const y = 73.5 + n * 26.35;
	if (!price) return;
	rect(1042, y - .5, 2, 1, '#ddd');
	label(1045.5, y + 3, price, 26.5);
});
rect(1043, 197, 32, 11.5, '#fff');
label(1045.5, 206, '112.470', 26.5, 'now');
label(1044, 402.500, '0.2632', 22);
label(1044, 432.5, '0.00', 15);
label(1043, 522.5, '-0.7136', 26);
label(1044, 535.5, '1', 4);
label(1044, 627, '0', 4.5);

label(17, 74.700, 'AUDJPY,H1', 41.5);
add('path', { d: 'M7 70.500h6.500l-3.250 3.500z', fill: '#fff' });
label(8, 403.800, 'Signal MACD(12,26,9) 0.0857 0.0000 0.0000 0.1033', 174.5);
label(8, 537, 'Signal Square 0.0500 0.2200', 95);

const times = ['24 Jul 2026', '27 Jul 13:00', '28 Jul 05:00', '28 Jul 21:00', '29 Jul 13:00', '30 Jul 05:00', '30 Jul 21:00', '31 Jul 13:00', '3 Aug 05:00', '3 Aug 21:00', '4 Aug 13:00', '5 Aug 05:00', '5 Aug 21:00', '6 Aug 13:00', '7 Aug 05:00', '7 Aug 21:00', '10 Aug 13:00', '11 Aug 05:00', '11 Aug 21:00'];
times.forEach((time, n) => {
	const x = 4.2 + n * 51.15;
	rect(x + 1, 630, 1, 2.5, '#ddd');
	label(x, 640, time, n === 0 ? 37.5 : n > 15 ? 45 : 40.5);
});
```
